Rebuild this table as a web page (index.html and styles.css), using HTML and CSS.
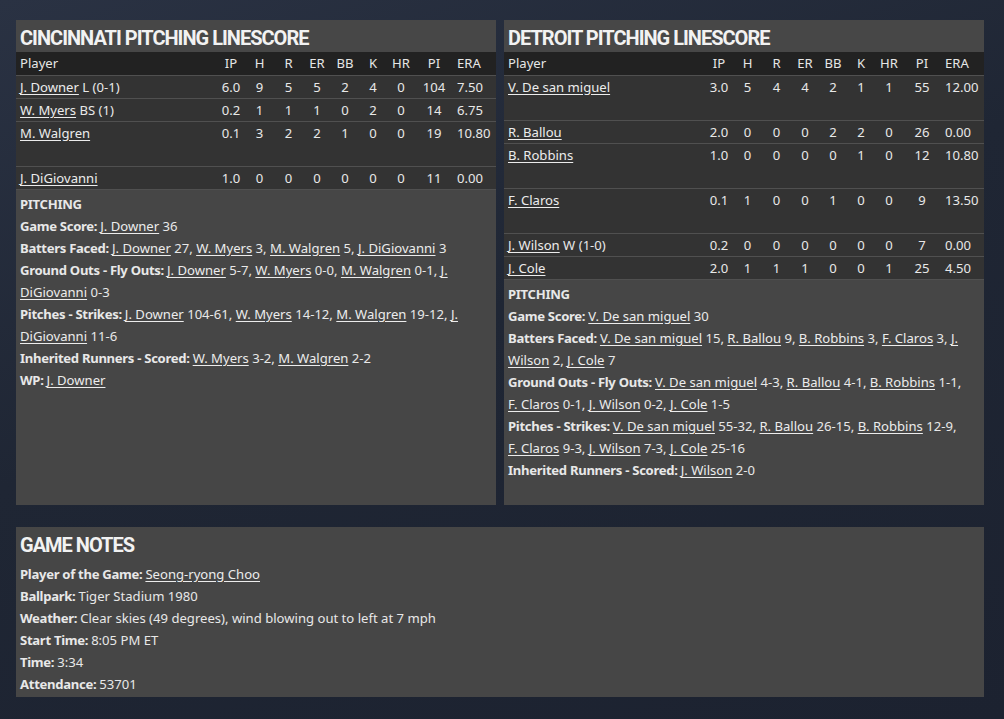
FILE: index.html
```html
<!DOCTYPE html>
<html>
<head>
<meta charset="utf-8">
<link rel="stylesheet" href="styles.css">
</head>
<body>
<div class="page">
  <div class="top">
    <section class="panel">
      <h2 class="title">CINCINNATI PITCHING LINESCORE</h2>
      <table class="ls">
        <colgroup><col class="c-player"><col class="c-n"><col class="c-n2"><col class="c-n2"><col class="c-n"><col class="c-n"><col class="c-n"><col class="c-n"><col class="c-pi"><col class="c-era"></colgroup>
        <thead><tr><th class="pl">Player</th><th>IP</th><th>H</th><th>R</th><th>ER</th><th>BB</th><th>K</th><th>HR</th><th>PI</th><th class="era">ERA</th></tr></thead>
        <tbody>
          <tr><td class="pl"><a>J. Downer</a> L (0-1)</td><td>6.0</td><td>9</td><td>5</td><td>5</td><td>2</td><td>4</td><td>0</td><td>104</td><td class="era">7.50</td></tr>
          <tr><td class="pl"><a>W. Myers</a> BS (1)</td><td>0.2</td><td>1</td><td>1</td><td>1</td><td>0</td><td>2</td><td>0</td><td>14</td><td class="era">6.75</td></tr>
          <tr class="tall"><td class="pl"><a>M. Walgren</a></td><td>0.1</td><td>3</td><td>2</td><td>2</td><td>1</td><td>0</td><td>0</td><td>19</td><td class="era">10.80</td></tr>
          <tr><td class="pl"><a>J. DiGiovanni</a></td><td>1.0</td><td>0</td><td>0</td><td>0</td><td>0</td><td>0</td><td>0</td><td>11</td><td class="era">0.00</td></tr>
        </tbody>
      </table>
      <div class="notes">
        <p class="b">PITCHING</p>
        <p><b>Game Score:</b><a>J. Downer</a> 36</p>
        <p><b>Batters Faced:</b><a>J. Downer</a> 27, <a>W. Myers</a> 3, <a>M. Walgren</a> 5, <a>J. DiGiovanni</a> 3</p>
        <p><b>Ground Outs - Fly Outs:</b><a>J. Downer</a> 5-7, <a>W. Myers</a> 0-0, <a>M. Walgren</a> 0-1, <a>J. DiGiovanni</a> 0-3</p>
        <p><b>Pitches - Strikes:</b><a>J. Downer</a> 104-61, <a>W. Myers</a> 14-12, <a>M. Walgren</a> 19-12, <a>J. DiGiovanni</a> 11-6</p>
        <p><b>Inherited Runners - Scored:</b><a>W. Myers</a> 3-2, <a>M. Walgren</a> 2-2</p>
        <p><b>WP:</b><a>J. Downer</a></p>
      </div>
    </section>
    <section class="panel">
      <h2 class="title">DETROIT PITCHING LINESCORE</h2>
      <table class="ls">
        <colgroup><col class="c-player"><col class="c-n"><col class="c-n2"><col class="c-n2"><col class="c-n"><col class="c-n"><col class="c-n"><col class="c-n"><col class="c-pi"><col class="c-era"></colgroup>
        <thead><tr><th class="pl">Player</th><th>IP</th><th>H</th><th>R</th><th>ER</th><th>BB</th><th>K</th><th>HR</th><th>PI</th><th class="era">ERA</th></tr></thead>
        <tbody>
          <tr class="tall"><td class="pl"><a>V. De san miguel</a></td><td>3.0</td><td>5</td><td>4</td><td>4</td><td>2</td><td>1</td><td>1</td><td>55</td><td class="era">12.00</td></tr>
          <tr><td class="pl"><a>R. Ballou</a></td><td>2.0</td><td>0</td><td>0</td><td>0</td><td>2</td><td>2</td><td>0</td><td>26</td><td class="era">0.00</td></tr>
          <tr class="tall"><td class="pl"><a>B. Robbins</a></td><td>1.0</td><td>0</td><td>0</td><td>0</td><td>0</td><td>1</td><td>0</td><td>12</td><td class="era">10.80</td></tr>
          <tr class="tall"><td class="pl"><a>F. Claros</a></td><td>0.1</td><td>1</td><td>0</td><td>0</td><td>1</td><td>0</td><td>0</td><td>9</td><td class="era">13.50</td></tr>
          <tr><td class="pl"><a>J. Wilson</a> W (1-0)</td><td>0.2</td><td>0</td><td>0</td><td>0</td><td>0</td><td>0</td><td>0</td><td>7</td><td class="era">0.00</td></tr>
          <tr><td class="pl"><a>J. Cole</a></td><td>2.0</td><td>1</td><td>1</td><td>1</td><td>0</td><td>0</td><td>1</td><td>25</td><td class="era">4.50</td></tr>
        </tbody>
      </table>
      <div class="notes">
        <p class="b">PITCHING</p>
        <p><b>Game Score:</b><a>V. De san miguel</a> 30</p>
        <p><b>Batters Faced:</b><a>V. De san miguel</a> 15, <a>R. Ballou</a> 9, <a>B. Robbins</a> 3, <a>F. Claros</a> 3, <a>J. Wilson</a> 2, <a>J. Cole</a> 7</p>
        <p><b>Ground Outs - Fly Outs:</b><a>V. De san miguel</a> <span class="nw">4-3,</span> <a>R. Ballou</a> <span class="nw">4-1,</span> <a>B. Robbins</a> <span class="nw">1-1,</span> <a class="nw">F. Claros</a> 0-1, <a>J. Wilson</a> 0-2, <a>J. Cole</a> 1-5</p>
        <p><b>Pitches - Strikes:</b><a>V. De san miguel</a> <span class="nw">55-32,</span> <a>R. Ballou</a> <span class="nw">26-15,</span> <a>B. Robbins</a> <span class="nw">12-9,</span> <a class="nw">F. Claros</a> 9-3, <a>J. Wilson</a> 7-3, <a>J. Cole</a> 25-16</p>
        <p><b>Inherited Runners - Scored:</b><a>J. Wilson</a> 2-0</p>
      </div>
    </section>
  </div>
  <section class="panel game">
    <h2 class="title plain">GAME NOTES</h2>
    <div class="notes">
      <p><b>Player of the Game:</b><a>Seong-ryong Choo</a></p>
      <p><b>Ballpark:</b>Tiger Stadium 1980</p>
      <p><b>Weather:</b>Clear skies (49 degrees), wind blowing out to left at 7 mph</p>
      <p><b>Start Time:</b>8:05 PM ET</p>
      <p><b>Time:</b>3:34</p>
      <p><b>Attendance:</b>53701</p>
    </div>
  </section>
</div>
</body>
</html>
```

FILE: styles.css
```css
html, body {
  margin: 0;
  padding: 0;
}
body {
  width: 1004px;
  height: 719px;
  overflow: hidden;
  background: linear-gradient(160deg, #2a3243 0%, #1f2634 45%, #1c2230 100%);
  font-family: "Noto Sans", "Open Sans", sans-serif;
  font-size: 13.1px;
  color: #e8e8e8;
}
.page {
  padding: 20px 20px 0 16px;
  display: flex;
  flex-direction: column;
  gap: 22px;
}
.top {
  display: flex;
  gap: 8px;
  height: 485px;
}
.top .panel {
  width: 480px;
}
.panel {
  background: #464646;
  display: flex;
  flex-direction: column;
}
.title {
  margin: 0;
  height: 32px;
  line-height: 36px;
  padding-left: 4px;
  font-family: Roboto, "Noto Sans", sans-serif;
  font-size: 20px;
  font-weight: 700;
  color: #f2f2f2;
  background: #474747;
  letter-spacing: -1px;
}
.ls {
  width: 480px;
  border-collapse: collapse;
  table-layout: fixed;
}
.c-player { width: 201px; }
.c-n { width: 28px; }
.c-n2 { width: 29px; }
.c-pi { width: 38px; }
.c-era { width: 43px; }
.ls th, .ls td {
  padding: 0;
  height: 22px;
  line-height: 22px;
  text-align: center;
  vertical-align: top;
  font-weight: 400;
  white-space: nowrap;
}
.ls thead tr {
  background: #222222;
}
.ls th {
  height: 23px;
  line-height: 23px;
  color: #e6e6e6;
}
.ls tbody tr {
  background: #333333;
  border-top: 1px solid #505050;
}
.ls tbody tr.tall td {
  height: 44px;
}
.ls .pl {
  text-align: left;
  padding-left: 4px;
}
.ls .era {
  text-align: left;
  padding-left: 4px;
}
a {
  color: #ececec;
  text-decoration: underline;
  text-underline-offset: 2px;
}
.notes {
  border-top: 1px solid #505050;
  padding: 3px 8px 0 4px;
}
.game .notes {
  border-top: none;
  padding-top: 4px;
}
.notes p {
  margin: 0;
  line-height: 22px;
}
.notes b {
  font-weight: 700;
  letter-spacing: -0.3px;
  margin-right: 3px;
}
.notes .b {
  font-weight: 700;
  letter-spacing: -0.3px;
}
.nw {
  white-space: nowrap;
}
.game {
  height: 170px;
  width: 968px;
}
.title.plain {
  background: transparent;
}
```
